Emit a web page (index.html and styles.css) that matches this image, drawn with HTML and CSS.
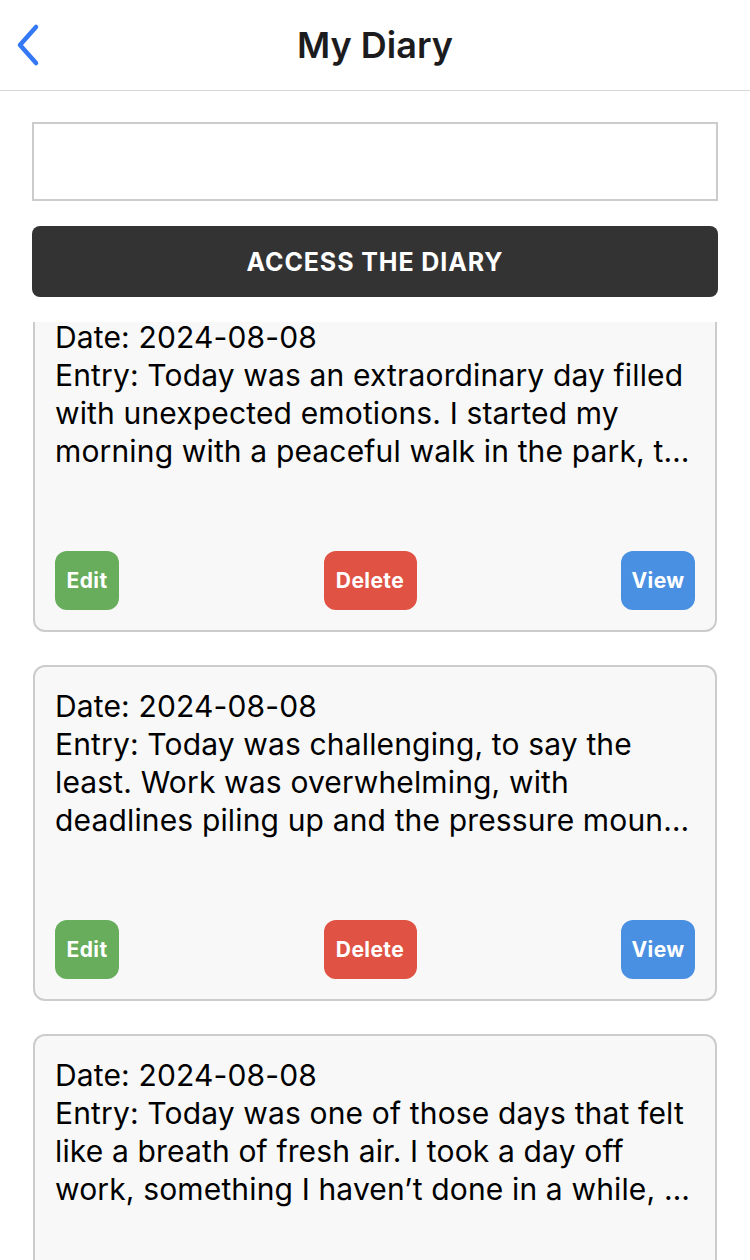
FILE: index.html
```html
<!DOCTYPE html>
<html>
<head>
<meta charset="utf-8">
<link rel="stylesheet" href="styles.css">
</head>
<body>
<div class="app">
  <header class="nav">
    <span class="back">
      <svg width="30" height="44" viewBox="0 0 30 44"><path d="M24 4 L8 22 L24 40" fill="none" stroke="#3478f6" stroke-width="4.5" stroke-linecap="round" stroke-linejoin="round"/></svg>
    </span>
    <h1 class="title">My Diary</h1>
  </header>
  <main class="content">
    <input class="pass" type="text">
    <button class="access">ACCESS THE DIARY</button>
    <div class="list">
      <div class="list-inner">
        <div class="card">
          <div class="text">
            <div class="date">Date: 2024-08-08</div>
            <div class="entry">
              <div class="line">Entry: Today was an extraordinary day filled</div>
              <div class="line">with unexpected emotions. I started my</div>
              <div class="line last">morning with a peaceful walk in the park, taking in the fresh air and the sound of birds singing.</div>
            </div>
          </div>
          <div class="actions">
            <button class="btn edit">Edit</button>
            <button class="btn del">Delete</button>
            <button class="btn view">View</button>
          </div>
        </div>
        <div class="card">
          <div class="text">
            <div class="date">Date: 2024-08-08</div>
            <div class="entry">
              <div class="line">Entry: Today was challenging, to say the</div>
              <div class="line">least. Work was overwhelming, with</div>
              <div class="line last">deadlines piling up and the pressure mounting with every passing hour of the day.</div>
            </div>
          </div>
          <div class="actions">
            <button class="btn edit">Edit</button>
            <button class="btn del">Delete</button>
            <button class="btn view">View</button>
          </div>
        </div>
        <div class="card">
          <div class="text">
            <div class="date">Date: 2024-08-08</div>
            <div class="entry">
              <div class="line">Entry: Today was one of those days that felt</div>
              <div class="line">like a breath of fresh air. I took a day off</div>
              <div class="line last">work, something I haven’t done in a while, and spent it doing exactly what I wanted.</div>
            </div>
          </div>
          <div class="actions">
            <button class="btn edit">Edit</button>
            <button class="btn del">Delete</button>
            <button class="btn view">View</button>
          </div>
        </div>
      </div>
    </div>
  </main>
</div>
</body>
</html>
```
FILE: styles.css
```css
* { box-sizing: border-box; }
html, body { margin: 0; padding: 0; background: #fff; }
body { font-family: Inter, "Noto Sans", sans-serif; color: #000; }
.app { width: 750px; height: 1260px; overflow: hidden; display: flex; flex-direction: column; }
.nav {
  height: 91px; flex: none;
  border-bottom: 1px solid #d8d8d8;
  display: flex; align-items: center; justify-content: center;
  position: relative;
}
.back { position: absolute; left: 12px; top: 23px; display: block; }
.back svg { display: block; }
.title { margin: 0; font-size: 36px; font-weight: 600; color: #1c1c1e; letter-spacing: 0; }
.content { flex: 1; display: flex; flex-direction: column; padding: 31px 32px 0 32px; min-height: 0; }
.pass {
  display: block; width: 686px; height: 79px; margin: 0;
  border: 2px solid #cccccc; background: #fff; outline: none; padding: 0 12px;
  font-size: 24px;
}
.access {
  margin-top: 25px; height: 71px; width: 686px;
  background: #333333; color: #fff; border: none; border-radius: 8px;
  font-family: Inter, sans-serif; font-weight: 700; font-size: 25px; letter-spacing: 0.9px;
}
.list { margin-top: 25px; flex: 1; overflow: hidden; min-height: 0; }
.list-inner { margin-top: -26px; display: flex; flex-direction: column; gap: 33px; padding: 0 1px; }
.card {
  height: 336px; background: #f8f8f8; border: 2px solid #cccccc; border-radius: 12px;
  padding: 20px 20px; display: flex; flex-direction: column; justify-content: space-between;
}
.text { font-size: 30px; line-height: 38px; letter-spacing: 0.15px; color: #000; }
.line { white-space: nowrap; }
.line.last { overflow: hidden; text-overflow: ellipsis; }
.actions { display: flex; justify-content: space-between; align-items: center; }
.btn {
  height: 59px; border: none; border-radius: 12px; color: #fff;
  font-family: Inter, sans-serif; font-weight: 700; font-size: 21px; letter-spacing: 0.4px;
  padding: 0;
}
.edit { background: #68ad5c; width: 64px; }
.del { background: #e05243; width: 93px; }
.view { background: #4a90e2; width: 74px; }
```
